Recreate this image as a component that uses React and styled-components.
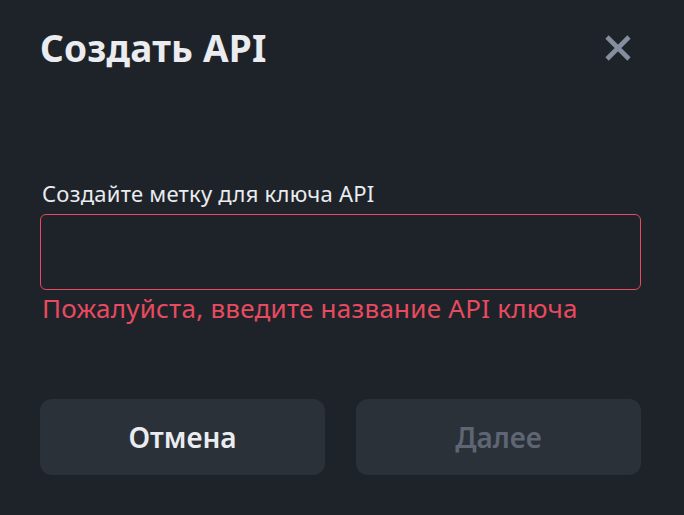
import React, { useState } from "react";
import styled, { createGlobalStyle } from "styled-components";

const Global = createGlobalStyle`
  html, body {
    margin: 0;
    padding: 0;
    background: #1e2329;
  }
  * {
    box-sizing: border-box;
  }
`;

const App = () => {
  const [label, setLabel] = useState("");

  return (
    <>
      <Global />
      <Modal>
        <Header>
          <Title>Создать API</Title>
          <Close aria-label="close">
            <svg width="30" height="30" viewBox="0 0 30 30">
              <path
                d="M4 4 L26 26 M26 4 L4 26"
                stroke="#848e9c"
                strokeWidth="4.6"
                strokeLinecap="butt"
              />
            </svg>
          </Close>
        </Header>

        <Field>
          <Label>Создайте метку для ключа API</Label>
          <Input
            error
            value={label}
            onChange={(e) => setLabel(e.target.value)}
          />
          <Error>Пожалуйста, введите название API ключа</Error>
        </Field>

        <Actions>
          <Button>Отмена</Button>
          <Button disabled>Далее</Button>
        </Actions>
      </Modal>
    </>
  );
};

export default App;

const Modal = styled.div`
  width: 684px;
  height: 515px;
  background: #1e2329;
  padding: 26px 43px 0 40px;
  font-family: "Noto Sans", "Liberation Sans", sans-serif;
  display: flex;
  flex-direction: column;
`;

const Header = styled.div`
  display: flex;
  align-items: center;
  justify-content: space-between;
  height: 44px;
`;

const Title = styled.h1`
  margin: 0;
  font-size: 37px;
  line-height: 44px;
  font-weight: 700;
  color: #eaecef;
  letter-spacing: 0.2px;
`;

const Close = styled.button`
  background: none;
  border: none;
  padding: 0;
  margin-right: 8px;
  display: flex;
  cursor: pointer;
`;

const Field = styled.div`
  margin-top: 110px;
  display: flex;
  flex-direction: column;
`;

const Label = styled.div`
  font-size: 22px;
  color: #eaecef;
  line-height: 26px;
  padding-left: 2px;
  letter-spacing: 0.25px;
`;

const Input = styled.input`
  margin-top: 8px;
  height: 76px;
  width: 601px;
  background: transparent;
  border: 1.5px solid ${({ error }) => (error ? "#e84a5f" : "#474d57")};
  border-radius: 6px;
  outline: none;
  color: #eaecef;
  font-size: 20px;
  padding: 0 14px;
`;

const Error = styled.div`
  margin-top: 2px;
  font-size: 26px;
  line-height: 32px;
  color: #e84a5f;
  padding-left: 2px;
  letter-spacing: 0.25px;
`;

const Actions = styled.div`
  margin-top: 75px;
  display: grid;
  grid-template-columns: 285px 285px;
  gap: 31px;
`;

const Button = styled.button`
  height: 76px;
  border: none;
  border-radius: 12px;
  background: #2b3139;
  font-family: inherit;
  font-size: 28px;
  font-weight: 600;
  color: ${({ disabled }) => (disabled ? "#5e6673" : "#eaecef")};
  cursor: ${({ disabled }) => (disabled ? "not-allowed" : "pointer")};
`;
